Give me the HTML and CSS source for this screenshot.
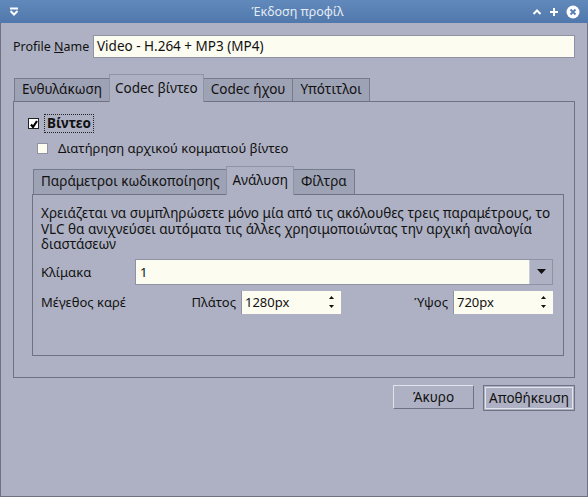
FILE: index.html
```html
<!DOCTYPE html>
<html lang="el">
<head>
  <meta charset="UTF-8" />
  <title>Έκδοση προφίλ</title>
  <link rel="stylesheet" href="styles.css">
</head>
<body>
  <div class="window">
    <div class="titlebar">
      <svg class="menu-icon" width="10" height="9" viewBox="0 0 10 9">
        <path d="M1 1.5h8" stroke="#fff" stroke-width="2"/>
        <path d="M1.5 4l3.5 3.5 3.5-3.5" stroke="#fff" stroke-width="2" fill="none"/>
      </svg>
      <span class="title">Έκδοση προφίλ</span>
      <div class="title-buttons">
        <svg width="10" height="8" viewBox="0 0 10 8"><path d="M1.5 6l3.5-3.5 3.5 3.5" stroke="#fff" stroke-width="2" fill="none"/></svg>
        <svg width="10" height="10" viewBox="0 0 10 10"><path d="M5 1v8M1 5h8" stroke="#fff" stroke-width="2"/></svg>
        <svg width="14" height="14" viewBox="0 0 14 14"><circle cx="7" cy="7" r="6.5" fill="#fff"/><path d="M4.5 4.5l5 5M9.5 4.5l-5 5" stroke="#5a82b4" stroke-width="2"/></svg>
      </div>
    </div>

    <div class="content">
      <div class="name-row">
        <label>Profile <u>N</u>ame</label>
        <div class="field name-field">Video - H.264 + MP3 (MP4)</div>
      </div>

      <div class="tabs outer-tabs">
        <div class="tab-bar">
          <div class="tab">Ενθυλάκωση</div>
          <div class="tab active">Codec βίντεο</div>
          <div class="tab">Codec ήχου</div>
          <div class="tab">Υπότιτλοι</div>
        </div>
        <div class="pane outer-pane">
          <div class="check-row main-check">
            <span class="checkbox checked">
              <svg width="8" height="8" viewBox="0 0 8 8"><path d="M1 4.5l2 2.5L7 1" stroke="#000" stroke-width="2.2" fill="none"/></svg>
            </span>
            <span class="focus-label">Βίντεο</span>
          </div>
          <div class="check-row sub-check">
            <span class="checkbox"></span>
            <span>Διατήρηση αρχικού κομματιού βίντεο</span>
          </div>

          <div class="tabs inner-tabs">
            <div class="tab-bar">
              <div class="tab">Παράμετροι κωδικοποίησης</div>
              <div class="tab active">Ανάλυση</div>
              <div class="tab">Φίλτρα</div>
            </div>
            <div class="pane inner-pane">
              <p class="hint">Χρειάζεται να συμπληρώσετε μόνο μία από τις ακόλουθες τρεις παραμέτρους, το VLC θα ανιχνεύσει αυτόματα τις άλλες χρησιμοποιώντας την αρχική αναλογία διαστάσεων</p>
              <div class="form-row">
                <span class="row-label">Κλίμακα</span>
                <div class="combo">
                  <span class="combo-text">1</span>
                  <span class="combo-btn">
                    <svg width="9" height="5" viewBox="0 0 9 5"><path d="M0 0h9L4.5 5z" fill="#111"/></svg>
                  </span>
                </div>
              </div>
              <div class="form-row size-row">
                <span class="row-label">Μέγεθος καρέ</span>
                <span class="spin-label width-label">Πλάτος</span>
                <div class="spin">
                  <span>1280px</span>
                  <span class="spin-arrows">
                    <svg width="5" height="3" viewBox="0 0 5 3"><path d="M0 3h5L2.5 0z" fill="#111"/></svg>
                    <svg width="5" height="3" viewBox="0 0 5 3"><path d="M0 0h5L2.5 3z" fill="#111"/></svg>
                  </span>
                </div>
                <span class="spin-label height-label">Ύψος</span>
                <div class="spin">
                  <span>720px</span>
                  <span class="spin-arrows">
                    <svg width="5" height="3" viewBox="0 0 5 3"><path d="M0 3h5L2.5 0z" fill="#111"/></svg>
                    <svg width="5" height="3" viewBox="0 0 5 3"><path d="M0 0h5L2.5 3z" fill="#111"/></svg>
                  </span>
                </div>
              </div>
            </div>
          </div>
        </div>
      </div>

      <div class="buttons">
        <button class="btn">Άκυρο</button>
        <button class="btn default">Αποθήκευση</button>
      </div>
    </div>
  </div>
</body>
</html>
```

FILE: styles.css
```css
* {
  margin: 0;
  padding: 0;
  box-sizing: border-box;
}

body {
  font-family: "Noto Sans", "DejaVu Sans", sans-serif;
  font-size: 13px;
  color: #111;
  background: #aeb1c3;
}

.window {
  width: 588px;
  height: 497px;
  background: #aeb1c3;
  border: 1px solid #6e7283;
  border-top: none;
  display: flex;
  flex-direction: column;
}

.titlebar {
  height: 23px;
  margin: 0 -1px;
  background: linear-gradient(#6189bb, #5078ac);
  display: flex;
  align-items: center;
  padding: 0 8px 0 9px;
  color: #e4ebf3;
}

.titlebar .title {
  flex: 1;
  text-align: center;
  font-size: 12.5px;
  padding-left: 44px;
}

.title-buttons {
  display: flex;
  align-items: center;
  gap: 7px;
}

.content {
  flex: 1;
  padding: 12px 12px 0 12px;
  display: flex;
  flex-direction: column;
}

.name-row {
  display: flex;
  align-items: center;
  height: 23px;
}

.name-row label {
  width: 80px;
  white-space: nowrap;
  font-size: 12.5px;
}

.field {
  background: #fcfcf1;
  border: 1px solid #8e92a2;
  height: 23px;
  line-height: 21px;
  padding-left: 3px;
}

.name-field {
  flex: 1;
  font-size: 13.5px;
}

.outer-tabs {
  margin-top: 16px;
}

.tab-bar {
  display: flex;
  align-items: flex-end;
  padding-left: 1px;
  position: relative;
  z-index: 1;
}

.tab {
  height: 23px;
  line-height: 21px;
  padding: 0 7px;
  background: #9ea2b5;
  border: 1px solid #767a8b;
  border-bottom: none;
  margin-right: -1px;
  font-size: 13.5px;
  white-space: nowrap;
}

.tab.active {
  height: 28px;
  line-height: 26px;
  background: #aeb1c3;
  border-color: #8f93a3;
  margin-bottom: -1px;
  padding: 0 5px;
  position: relative;
}

.inner-tabs .tab {
  height: 25px;
  line-height: 23px;
}

.inner-tabs .tab.active {
  height: 29px;
  line-height: 27px;
}

.pane {
  border: 1px solid #6e7283;
  position: relative;
}

.outer-pane {
  height: 277px;
  padding: 12px 10px 0 18px;
}

.check-row {
  display: flex;
  align-items: center;
}

.main-check {
  margin-left: -4px;
  height: 19px;
}

.sub-check {
  margin-top: 6px;
  margin-left: 5px;
}

.checkbox {
  width: 11px;
  height: 11px;
  border: 1px solid #8e92a2;
  background: #fcfcf1;
  display: inline-flex;
  align-items: center;
  justify-content: center;
  margin-right: 10px;
}

.checkbox.checked {
  background: #fff;
  border-color: #222;
  margin-right: 5px;
}

.focus-label {
  font-weight: bold;
  font-size: 13.5px;
  border: 1px dotted #222;
  padding: 0 2px;
  line-height: 17px;
}

.inner-tabs {
  margin-top: 9px;
}

.inner-pane {
  height: 162px;
  padding: 11px 10px 0 8px;
}

.hint {
  line-height: 15.5px;
  font-size: 13.5px;
}

.form-row {
  display: flex;
  align-items: center;
  margin-top: 6px;
}

.row-label {
  width: 94px;
}

.combo {
  flex: 1;
  display: flex;
  height: 26px;
  background: #fcfcf1;
  border: 1px solid #8e92a2;
}

.combo-text {
  flex: 1;
  padding-left: 4px;
  line-height: 24px;
}

.combo-btn {
  width: 23px;
  background: #aeb1c3;
  border-left: 1px solid #c8cbd8;
  display: flex;
  align-items: center;
  justify-content: center;
}

.size-row {
  margin-top: 6px;
}

.spin-label {
  text-align: right;
  padding-right: 5px;
}

.width-label {
  width: 106px;
}

.height-label {
  width: 112px;
}

.spin {
  width: 100px;
  height: 23px;
  background: #fcfcf1;
  border-left: 1px solid #8e92a2;
  display: flex;
  align-items: center;
  justify-content: space-between;
  padding: 0 7px 0 3px;
}

.spin-arrows {
  display: flex;
  flex-direction: column;
  gap: 6px;
}

.spin-arrows svg {
  display: block;
}

.buttons {
  display: flex;
  justify-content: flex-end;
  gap: 9px;
  margin-top: 7px;
}

.btn {
  font-family: "Noto Sans", "DejaVu Sans", sans-serif;
  font-size: 13.5px;
  color: #111;
  background: #aeb1c3;
  border: 1px solid;
  border-color: #e2e4ec #6e7283 #6e7283 #e2e4ec;
  height: 24px;
  width: 81px;
}

.btn.default {
  width: 92px;
  height: 26px;
  outline: 1px solid #e2e4ec;
  outline-offset: -3px;
  border-color: #6e7283;
}
```
